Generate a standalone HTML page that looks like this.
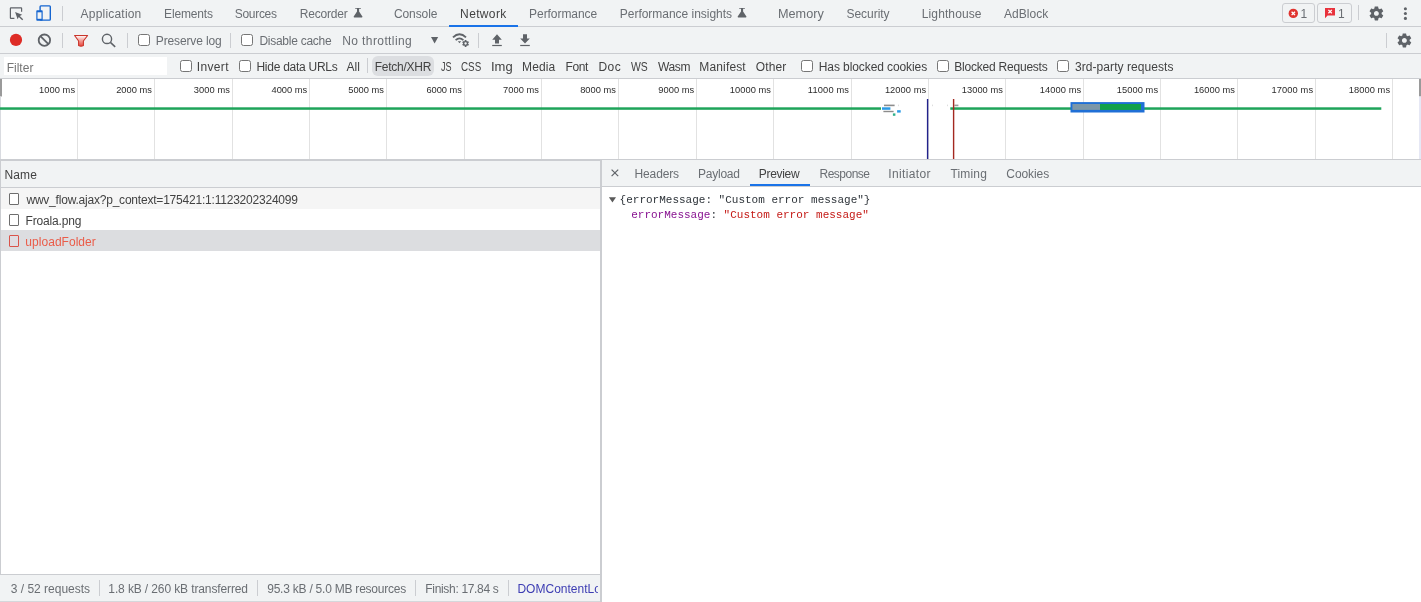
<!DOCTYPE html>
<html>
<head>
<meta charset="utf-8">
<title>DevTools - Network</title>
<style>
html,body{margin:0;padding:0;}
body{width:1421px;height:602px;overflow:hidden;background:#fff;position:relative;
  font-family:"Liberation Sans",sans-serif;font-size:12px;color:#5f6368;}
.abs{position:absolute;}
.bar{position:absolute;left:0;width:1421px;background:#f1f3f4;}
.hl{position:absolute;left:0;width:1421px;height:1px;background:#cbcdd1;}
.t{position:absolute;white-space:nowrap;line-height:14px;height:14px;}
.sep{position:absolute;width:1px;background:#cbcdd1;}
.cb{position:absolute;width:10px;height:10px;border:1px solid #767676;border-radius:2.5px;background:#fff;}
.fi{position:absolute;width:8px;height:10px;border:1px solid #6e6e6e;border-radius:1px;background:#fff;}
.mono{position:absolute;white-space:pre;font-family:"Liberation Mono",monospace;font-size:11px;line-height:14px;height:14px;color:#2f353b;}
.ov{font-size:9.3px;}
svg{position:absolute;overflow:visible;}
</style>
</head>
<body>
<div style="position:absolute;left:0;top:0;width:1421px;height:602px;will-change:transform;">

<!-- ===== main tab bar ===== -->
<div class="bar" style="top:0;height:26px;"></div>
<div class="hl" style="top:26px;"></div>
<div class="sep" style="left:62px;top:6px;height:15px;"></div>
<div class="abs" style="left:449px;top:25px;width:69px;height:2px;background:#1a73e8;"></div>

<!-- inspect icon -->
<svg style="left:0;top:0;" width="64" height="27" viewBox="0 0 64 27">
  <path d="M21.6 11.8 V8.3 Q21.6 7.8 21.1 7.8 H10.9 Q10.4 7.8 10.4 8.3 V17.9 Q10.4 18.4 10.9 18.4 H14.4" fill="none" stroke="#5f6368" stroke-width="1.2"/>
  <path d="M15.1 11.9 L22.2 14.7 L19.8 15.9 L23.2 19.3 L22.2 20.3 L18.8 16.9 L17.6 19.2 Z" fill="#5f6368"/>
  <!-- device toolbar icon -->
  <rect x="40.1" y="5.9" width="10.2" height="14.2" rx="0.8" fill="none" stroke="#1565d0" stroke-width="1.4"/>
  <rect x="36.3" y="10.3" width="6.4" height="10.4" rx="0.8" fill="#1565d0"/>
  <rect x="37.5" y="12.3" width="4" height="6.5" fill="#f1f3f4"/>
</svg>

<!-- issue counters -->
<div class="abs" style="left:1282px;top:3px;width:31px;height:18px;border:1px solid #cbcdd1;border-radius:3px;"></div>
<div class="abs" style="left:1317px;top:3px;width:33px;height:18px;border:1px solid #cbcdd1;border-radius:3px;"></div>
<svg style="left:1280px;top:0;" width="80" height="27" viewBox="1280 0 80 27">
  <circle cx="1293.3" cy="13.4" r="4.7" fill="#e0342f"/>
  <path d="M1291.6 11.7 L1295 15.1 M1295 11.7 L1291.6 15.1" stroke="#fff" stroke-width="1.3" fill="none"/>
  <path d="M1325 8 H1335 V15.4 H1327.6 L1325 18.2 Z" fill="#e8323c"/>
  <path d="M1328.4 9.9 L1331.8 13.3 M1331.8 9.9 L1328.4 13.3" stroke="#fff" stroke-width="1.3" fill="none"/>
</svg>
<div class="sep" style="left:1358px;top:5px;height:15px;"></div>
<!-- gear (tab bar) -->
<svg style="left:1368.2px;top:4.8px;" width="16.8" height="16.8" viewBox="0 0 24 24"><path fill="#5f6368" d="M19.43 12.98c.04-.32.07-.64.07-.98s-.03-.66-.07-.98l2.11-1.65c.19-.15.24-.42.12-.64l-2-3.46c-.12-.22-.39-.3-.61-.22l-2.49 1c-.52-.4-1.08-.73-1.69-.98l-.38-2.65C14.46 2.18 14.25 2 14 2h-4c-.25 0-.46.18-.49.42l-.38 2.65c-.61.25-1.17.59-1.69.98l-2.49-1c-.23-.09-.49 0-.61.22l-2 3.46c-.13.22-.07.49.12.64l2.11 1.65c-.04.32-.07.65-.07.98s.03.66.07.98l-2.11 1.65c-.19.15-.24.42-.12.64l2 3.46c.12.22.39.3.61.22l2.49-1c.52.4 1.08.73 1.69.98l.38 2.65c.03.24.24.42.49.42h4c.25 0 .46-.18.49-.42l.38-2.65c.61-.25 1.17-.59 1.69-.98l2.49 1c.23.09.49 0 .61-.22l2-3.46c.12-.22.07-.49-.12-.64l-2.11-1.65zM12 15.5c-1.93 0-3.5-1.57-3.5-3.5s1.57-3.5 3.5-3.5 3.5 1.57 3.5 3.5-1.57 3.5-3.5 3.5z"/></svg>
<!-- kebab -->
<svg style="left:1400px;top:0;" width="12" height="27" viewBox="0 0 12 27">
  <circle cx="5.4" cy="8.7" r="1.55" fill="#5f6368"/><circle cx="5.4" cy="13.5" r="1.55" fill="#5f6368"/><circle cx="5.4" cy="18.4" r="1.55" fill="#5f6368"/>
</svg>
<!-- flask icons -->
<svg style="left:352px;top:6px;" width="12" height="14" viewBox="0 0 12 14"><path d="M3.2 2 H8.9 V2.8 H7.1 V5.6 L10.4 10.6 Q10.8 11.4 9.9 11.4 H2.2 Q1.3 11.4 1.7 10.6 L5 5.6 V2.8 H3.2 Z" fill="#5f6368"/></svg>
<svg style="left:736px;top:6px;" width="12" height="14" viewBox="0 0 12 14"><path d="M3.2 2 H8.9 V2.8 H7.1 V5.6 L10.4 10.6 Q10.8 11.4 9.9 11.4 H2.2 Q1.3 11.4 1.7 10.6 L5 5.6 V2.8 H3.2 Z" fill="#5f6368"/></svg>

<!-- ===== network toolbar ===== -->
<div class="bar" style="top:27px;height:26px;"></div>
<div class="hl" style="top:53px;"></div>
<div class="sep" style="left:62px;top:32.5px;height:15.5px;"></div>
<div class="sep" style="left:127px;top:32.5px;height:15.5px;"></div>
<div class="sep" style="left:230px;top:32.5px;height:15.5px;"></div>
<div class="sep" style="left:478px;top:32.5px;height:15.5px;"></div>
<div class="sep" style="left:1386px;top:32.5px;height:15.5px;"></div>
<div class="cb" style="left:138px;top:34px;"></div>
<div class="cb" style="left:241px;top:34px;"></div>
<svg style="left:0;top:27px;" width="540" height="27" viewBox="0 27 540 27">
  <defs><linearGradient id="fg" x1="0" y1="0" x2="0" y2="1"><stop offset="0" stop-color="#fff"/><stop offset="0.35" stop-color="#f7b5b0"/><stop offset="1" stop-color="#e8453c"/></linearGradient></defs>
  <!-- record -->
  <circle cx="16" cy="39.9" r="6.1" fill="#de2c26"/>
  <!-- clear -->
  <circle cx="44.4" cy="40.2" r="5.7" fill="none" stroke="#5f6368" stroke-width="1.8"/>
  <path d="M40.4 36.2 L48.4 44.2" stroke="#5f6368" stroke-width="1.8"/>
  <!-- filter funnel -->
  <path d="M74.6 35.5 H87.6 L83.4 41 V45.6 Q81 46.8 78.6 45.6 V41 Z" fill="url(#fg)" stroke="#c9352b" stroke-width="1.1" stroke-linejoin="round"/>
  <!-- search -->
  <circle cx="107" cy="38.9" r="4.6" fill="none" stroke="#5f6368" stroke-width="1.4"/>
  <path d="M110.4 42.4 L115.2 46.8" stroke="#5f6368" stroke-width="1.6"/>
  <!-- dropdown arrow -->
  <path d="M431 37 H438.2 L434.6 43.5 Z" fill="#5f6368"/>
  <!-- wifi / network conditions -->
  <path d="M453 37.4 Q459.5 31.2 466 37.4" fill="none" stroke="#5f6368" stroke-width="1.9"/>
  <path d="M455.6 40.2 Q459.5 36.4 463.4 40.2" fill="none" stroke="#5f6368" stroke-width="1.7"/>
  <path d="M457.8 41.2 H461.2 L459.5 43.2 Z" fill="#5f6368"/>
  <g transform="translate(461.5 39.4) scale(0.34)"><path fill="#5f6368" d="M19.43 12.98c.04-.32.07-.64.07-.98s-.03-.66-.07-.98l2.11-1.65c.19-.15.24-.42.12-.64l-2-3.46c-.12-.22-.39-.3-.61-.22l-2.49 1c-.52-.4-1.08-.73-1.69-.98l-.38-2.65C14.46 2.18 14.25 2 14 2h-4c-.25 0-.46.18-.49.42l-.38 2.65c-.61.25-1.17.59-1.69.98l-2.49-1c-.23-.09-.49 0-.61.22l-2 3.46c-.13.22-.07.49.12.64l2.11 1.65c-.04.32-.07.65-.07.98s.03.66.07.98l-2.11 1.65c-.19.15-.24.42-.12.64l2 3.46c.12.22.39.3.61.22l2.49-1c.52.4 1.08.73 1.69.98l.38 2.65c.03.24.24.42.49.42h4c.25 0 .46-.18.49-.42l.38-2.65c.61-.25 1.17-.59 1.69-.98l2.49 1c.23.09.49 0 .61-.22l2-3.46c.12-.22.07-.49-.12-.64l-2.11-1.65zM12 15.5c-1.93 0-3.5-1.57-3.5-3.5s1.57-3.5 3.5-3.5 3.5 1.57 3.5 3.5-1.57 3.5-3.5 3.5z"/></g>
  <!-- upload -->
  <path d="M497 34.2 L501.8 39.7 H499 V43.5 H495 V39.7 H492.2 Z" fill="#5f6368"/>
  <rect x="492.2" y="44.9" width="9.6" height="1.2" fill="#5f6368"/>
  <!-- download -->
  <path d="M523 34.2 H527 V38.4 H529.8 L525 43.6 L520.2 38.4 H523 Z" fill="#5f6368"/>
  <rect x="520.2" y="44.9" width="9.6" height="1.2" fill="#5f6368"/>
</svg>
<!-- gear (toolbar) -->
<svg style="left:1396.3px;top:31.8px;" width="16.8" height="16.8" viewBox="0 0 24 24"><path fill="#5f6368" d="M19.43 12.98c.04-.32.07-.64.07-.98s-.03-.66-.07-.98l2.11-1.65c.19-.15.24-.42.12-.64l-2-3.46c-.12-.22-.39-.3-.61-.22l-2.49 1c-.52-.4-1.08-.73-1.69-.98l-.38-2.65C14.46 2.18 14.25 2 14 2h-4c-.25 0-.46.18-.49.42l-.38 2.65c-.61.25-1.17.59-1.69.98l-2.49-1c-.23-.09-.49 0-.61.22l-2 3.46c-.13.22-.07.49.12.64l2.11 1.65c-.04.32-.07.65-.07.98s.03.66.07.98l-2.11 1.65c-.19.15-.24.42-.12.64l2 3.46c.12.22.39.3.61.22l2.49-1c.52.4 1.08.73 1.69.98l.38 2.65c.03.24.24.42.49.42h4c.25 0 .46-.18.49-.42l.38-2.65c.61-.25 1.17-.59 1.69-.98l2.49 1c.23.09.49 0 .61-.22l2-3.46c.12-.22.07-.49-.12-.64l-2.11-1.65zM12 15.5c-1.93 0-3.5-1.57-3.5-3.5s1.57-3.5 3.5-3.5 3.5 1.57 3.5 3.5-1.57 3.5-3.5 3.5z"/></svg>

<!-- ===== filter bar ===== -->
<div class="bar" style="top:54px;height:24px;"></div>
<div class="hl" style="top:78px;"></div>
<div class="abs" style="left:4px;top:57px;width:163px;height:18px;background:#fff;"></div>
<div class="cb" style="left:180px;top:60px;"></div>
<div class="cb" style="left:239px;top:60px;"></div>
<div class="sep" style="left:367px;top:58px;height:15px;"></div>
<div class="abs" style="left:372px;top:56px;width:62px;height:20px;background:#dcdee1;border-radius:6px;"></div>
<div class="cb" style="left:801px;top:60px;"></div>
<div class="cb" style="left:937px;top:60px;"></div>
<div class="cb" style="left:1057px;top:60px;"></div>

<!-- ===== overview timeline ===== -->
<svg style="left:0;top:79px;" width="1421" height="80" viewBox="0 79 1421 80">
  <g fill="#e2e2e2" shape-rendering="crispEdges"><rect x="77" y="79" width="1" height="80"/><rect x="154" y="79" width="1" height="80"/><rect x="232" y="79" width="1" height="80"/><rect x="309" y="79" width="1" height="80"/><rect x="386" y="79" width="1" height="80"/><rect x="464" y="79" width="1" height="80"/><rect x="541" y="79" width="1" height="80"/><rect x="618" y="79" width="1" height="80"/><rect x="696" y="79" width="1" height="80"/><rect x="773" y="79" width="1" height="80"/><rect x="851" y="79" width="1" height="80"/><rect x="928" y="79" width="1" height="80"/><rect x="1005" y="79" width="1" height="80"/><rect x="1083" y="79" width="1" height="80"/><rect x="1160" y="79" width="1" height="80"/><rect x="1237" y="79" width="1" height="80"/><rect x="1315" y="79" width="1" height="80"/><rect x="1392" y="79" width="1" height="80"/></g>
  <rect x="0" y="79" width="2" height="17.5" fill="#9a9a9a"/>
  <rect x="0" y="96.5" width="1" height="62.5" fill="#d9dbe0"/>
  <rect x="1419" y="79" width="2" height="17.5" fill="#9a9a9a"/>
  <rect x="1419" y="96.5" width="2" height="62.5" fill="#e6e8f5"/>
  <!-- green request line -->
  <rect x="0" y="107.3" width="881" height="2.5" fill="#1ea45a"/>
  <rect x="950.3" y="107.3" width="431" height="2.5" fill="#1ea45a"/>
  <!-- small request bars -->
  <rect x="884" y="104.6" width="10.6" height="1.6" fill="#8c8c8c"/>
  <rect x="882" y="107.3" width="8.4" height="2.5" fill="#2a9be6"/>
  <rect x="883.4" y="110.8" width="10.2" height="1.4" fill="#8c8c8c"/>
  <rect x="897.1" y="110.2" width="3.6" height="2.4" fill="#2a9be6"/>
  <rect x="892.9" y="113.4" width="2.5" height="2.4" fill="#2fb08a"/>
  <rect x="898" y="104.6" width="1" height="1.6" fill="#dedede"/>
  <rect x="932" y="104.6" width="1" height="1.6" fill="#dedede"/>
  <rect x="947" y="104.6" width="1" height="1.6" fill="#dedede"/>
  <rect x="954.4" y="104.6" width="4" height="1.6" fill="#9c9c9c"/>
  <!-- DOMContentLoaded / load lines -->
  <rect x="926.9" y="99" width="1.4" height="60" fill="#22228c"/>
  <rect x="952.9" y="99" width="1.4" height="60" fill="#a32820"/>
  <!-- selected request -->
  <rect x="1070.5" y="102.1" width="74" height="10.4" fill="#1f6fd6"/>
  <rect x="1072.4" y="104" width="27.6" height="5.9" fill="#7c97a8"/>
  <rect x="1100" y="104" width="41" height="5.9" fill="#12a14b"/>
</svg>

<!-- ===== split panes ===== -->
<div class="hl" style="top:159px;"></div>
<!-- left: request list -->
<div class="abs" style="left:0;top:160px;width:600px;height:27px;background:#f1f3f4;border-top:1px solid #cbcdd1;box-sizing:border-box;"></div>
<div class="hl" style="top:187px;width:600px;"></div>
<div class="abs" style="left:0;top:188px;width:600px;height:21px;background:#f5f5f5;"></div>
<div class="abs" style="left:0;top:230px;width:600px;height:21px;background:#dcdde0;"></div>
<div class="abs" style="left:0;top:160px;width:1px;height:415px;background:#cbcdd1;"></div>
<div class="fi" style="left:9px;top:193px;"></div>
<div class="fi" style="left:9px;top:214px;"></div>
<div class="fi" style="left:9px;top:235px;border-color:#d9534a;background:#dfdde2;"></div>
<!-- status bar -->
<div class="abs" style="left:0;top:574px;width:600px;height:28px;background:#f1f3f4;border-top:1px solid #cbcdd1;box-sizing:border-box;"></div>
<div class="abs" style="left:0;top:601px;width:600px;height:1px;background:#d5d7db;"></div>
<div class="sep" style="left:99px;top:580px;height:16px;"></div>
<div class="sep" style="left:257px;top:580px;height:16px;"></div>
<div class="sep" style="left:415px;top:580px;height:16px;"></div>
<div class="sep" style="left:508px;top:580px;height:16px;"></div>
<div class="abs" style="left:517px;top:582px;width:81px;height:14px;overflow:hidden;"><span class="t" style="left:0.4px;top:0;color:#3d3db3;letter-spacing:0.02px;">DOMContentLoaded: 12.02 s</span></div>
<!-- divider -->
<div class="abs" style="left:600px;top:160px;width:2px;height:442px;background:#cbcdd1;"></div>
<!-- right: detail pane -->
<div class="abs" style="left:602px;top:160px;width:819px;height:26px;background:#f1f3f4;"></div>
<div class="abs" style="left:602px;top:186px;width:819px;height:1px;background:#cbcdd1;"></div>
<div class="abs" style="left:750px;top:184px;width:60px;height:2px;background:#1a73e8;"></div>
<svg style="left:600px;top:160px;" width="40" height="50" viewBox="600 160 40 50">
  <path d="M611.6 169.6 L618.2 176.2 M618.2 169.6 L611.6 176.2" stroke="#5f6368" stroke-width="1.2" fill="none"/>
  <path d="M608.9 197.2 H616 L612.45 202.4 Z" fill="#5a5a5a"/>
</svg>
<span class="mono" style="left:619.6px;top:193px;">{errorMessage: "Custom error message"}</span>
<span class="mono" style="left:631.2px;top:208px;"><span style="color:#881391">errorMessage</span>: <span style="color:#c41a16">"Custom error message"</span></span>

<!-- ===== text labels ===== -->
<span class="t " style="left:80.59px;top:7px;color:#6a6e73;letter-spacing:0.201px;">Application</span>
<span class="t " style="left:164.09px;top:7px;color:#6a6e73;letter-spacing:-0.166px;">Elements</span>
<span class="t " style="left:234.66px;top:7px;color:#6a6e73;letter-spacing:-0.280px;">Sources</span>
<span class="t " style="left:299.83px;top:7px;color:#6a6e73;letter-spacing:-0.207px;">Recorder</span>
<span class="t " style="left:393.88px;top:7px;color:#6a6e73;letter-spacing:-0.068px;">Console</span>
<span class="t " style="left:460.11px;top:7px;color:#424242;letter-spacing:0.354px;">Network</span>
<span class="t " style="left:529.09px;top:7px;color:#6a6e73;letter-spacing:-0.057px;">Performance</span>
<span class="t " style="left:619.83px;top:7px;color:#6a6e73;letter-spacing:-0.029px;">Performance insights</span>
<span class="t " style="left:778.12px;top:7px;color:#6a6e73;transform-origin:0 0;transform:scaleX(1.0558);">Memory</span>
<span class="t " style="left:846.47px;top:7px;color:#6a6e73;letter-spacing:-0.035px;">Security</span>
<span class="t " style="left:921.83px;top:7px;color:#6a6e73;letter-spacing:0.102px;">Lighthouse</span>
<span class="t " style="left:1004.10px;top:7px;color:#6a6e73;letter-spacing:0.009px;">AdBlock</span>
<span class="t " style="left:1300.60px;top:7px;color:#6a6e73;letter-spacing:0.000px;">1</span>
<span class="t " style="left:1338.10px;top:7px;color:#6a6e73;letter-spacing:0.000px;">1</span>
<span class="t " style="left:155.83px;top:34px;color:#6a6e73;letter-spacing:-0.143px;">Preserve log</span>
<span class="t " style="left:259.43px;top:34px;color:#6a6e73;letter-spacing:-0.265px;">Disable cache</span>
<span class="t " style="left:342.27px;top:34px;color:#6a6e73;letter-spacing:0.395px;">No throttling</span>
<span class="t " style="left:6.69px;top:61px;color:#757575;letter-spacing:0.006px;">Filter</span>
<span class="t " style="left:196.87px;top:60px;color:#424242;letter-spacing:0.320px;">Invert</span>
<span class="t " style="left:256.44px;top:60px;color:#424242;letter-spacing:-0.261px;">Hide data URLs</span>
<span class="t " style="left:346.62px;top:60px;color:#424242;letter-spacing:-0.003px;">All</span>
<span class="t " style="left:374.77px;top:60px;color:#424242;letter-spacing:-0.256px;">Fetch/XHR</span>
<span class="t " style="left:440.90px;top:60px;color:#424242;transform-origin:0 0;transform:scaleX(0.7558);">JS</span>
<span class="t " style="left:461.29px;top:60px;color:#424242;transform-origin:0 0;transform:scaleX(0.8188);">CSS</span>
<span class="t " style="left:491.13px;top:60px;color:#424242;transform-origin:0 0;transform:scaleX(1.0853);">Img</span>
<span class="t " style="left:522.09px;top:60px;color:#424242;letter-spacing:0.102px;">Media</span>
<span class="t " style="left:565.41px;top:60px;color:#424242;letter-spacing:-0.324px;">Font</span>
<span class="t " style="left:598.54px;top:60px;color:#424242;letter-spacing:0.381px;">Doc</span>
<span class="t " style="left:630.66px;top:60px;color:#424242;transform-origin:0 0;transform:scaleX(0.8684);">WS</span>
<span class="t " style="left:658.11px;top:60px;color:#424242;letter-spacing:-0.428px;">Wasm</span>
<span class="t " style="left:699.34px;top:60px;color:#424242;letter-spacing:0.146px;">Manifest</span>
<span class="t " style="left:755.84px;top:60px;color:#424242;letter-spacing:0.073px;">Other</span>
<span class="t " style="left:818.78px;top:60px;color:#424242;letter-spacing:-0.091px;">Has blocked cookies</span>
<span class="t " style="left:954.33px;top:60px;color:#424242;letter-spacing:-0.222px;">Blocked Requests</span>
<span class="t " style="left:1075.03px;top:60px;color:#424242;letter-spacing:0.062px;">3rd-party requests</span>
<span class="t " style="left:4.51px;top:168px;color:#424242;letter-spacing:0.106px;">Name</span>
<span class="t " style="left:26.43px;top:193px;color:#424242;letter-spacing:-0.210px;">wwv_flow.ajax?p_context=175421:1:1123202324099</span>
<span class="t " style="left:25.54px;top:214px;color:#424242;letter-spacing:-0.163px;">Froala.png</span>
<span class="t " style="left:25.36px;top:235px;color:#ea5c49;letter-spacing:0.033px;">uploadFolder</span>
<span class="t " style="left:634.56px;top:167px;color:#6a6e73;letter-spacing:-0.134px;">Headers</span>
<span class="t " style="left:697.99px;top:167px;color:#6a6e73;letter-spacing:-0.233px;">Payload</span>
<span class="t " style="left:758.81px;top:167px;color:#424242;letter-spacing:-0.309px;">Preview</span>
<span class="t " style="left:819.51px;top:167px;color:#6a6e73;letter-spacing:-0.503px;">Response</span>
<span class="t " style="left:888.35px;top:167px;color:#6a6e73;letter-spacing:0.337px;">Initiator</span>
<span class="t " style="left:950.50px;top:167px;color:#6a6e73;letter-spacing:0.159px;">Timing</span>
<span class="t " style="left:1006.36px;top:167px;color:#6a6e73;letter-spacing:-0.094px;">Cookies</span>
<span class="t " style="left:10.81px;top:582px;color:#6a6e73;letter-spacing:-0.012px;">3 / 52 requests</span>
<span class="t " style="left:108.34px;top:582px;color:#6a6e73;letter-spacing:-0.117px;">1.8 kB / 260 kB transferred</span>
<span class="t " style="left:267.21px;top:582px;color:#6a6e73;letter-spacing:-0.228px;">95.3 kB / 5.0 MB resources</span>
<span class="t " style="left:425.35px;top:582px;color:#6a6e73;letter-spacing:-0.327px;">Finish: 17.84 s</span>
<span class="t ov" style="left:38.92px;top:83px;color:#2c2c2c;letter-spacing:0.081px;">1000 ms</span>
<span class="t ov" style="left:116.16px;top:83px;color:#2c2c2c;letter-spacing:0.034px;">2000 ms</span>
<span class="t ov" style="left:193.86px;top:83px;color:#2c2c2c;letter-spacing:0.063px;">3000 ms</span>
<span class="t ov" style="left:271.51px;top:83px;color:#2c2c2c;letter-spacing:-0.013px;">4000 ms</span>
<span class="t ov" style="left:348.26px;top:83px;color:#2c2c2c;letter-spacing:0.004px;">5000 ms</span>
<span class="t ov" style="left:426.41px;top:83px;color:#2c2c2c;letter-spacing:-0.031px;">6000 ms</span>
<span class="t ov" style="left:503.00px;top:83px;color:#2c2c2c;letter-spacing:0.053px;">7000 ms</span>
<span class="t ov" style="left:580.16px;top:83px;color:#2c2c2c;letter-spacing:0.030px;">8000 ms</span>
<span class="t ov" style="left:658.33px;top:83px;color:#2c2c2c;letter-spacing:0.019px;">9000 ms</span>
<span class="t ov" style="left:729.85px;top:83px;color:#2c2c2c;letter-spacing:0.047px;">10000 ms</span>
<span class="t ov" style="left:807.87px;top:83px;color:#2c2c2c;letter-spacing:0.138px;">11000 ms</span>
<span class="t ov" style="left:884.88px;top:83px;color:#2c2c2c;letter-spacing:0.056px;">12000 ms</span>
<span class="t ov" style="left:961.77px;top:83px;color:#2c2c2c;letter-spacing:0.041px;">13000 ms</span>
<span class="t ov" style="left:1039.87px;top:83px;color:#2c2c2c;letter-spacing:0.065px;">14000 ms</span>
<span class="t ov" style="left:1116.82px;top:83px;color:#2c2c2c;letter-spacing:0.058px;">15000 ms</span>
<span class="t ov" style="left:1193.89px;top:83px;color:#2c2c2c;letter-spacing:0.028px;">16000 ms</span>
<span class="t ov" style="left:1271.50px;top:83px;color:#2c2c2c;letter-spacing:0.107px;">17000 ms</span>
<span class="t ov" style="left:1348.78px;top:83px;color:#2c2c2c;letter-spacing:0.065px;">18000 ms</span>

</div>
</body>
</html>
